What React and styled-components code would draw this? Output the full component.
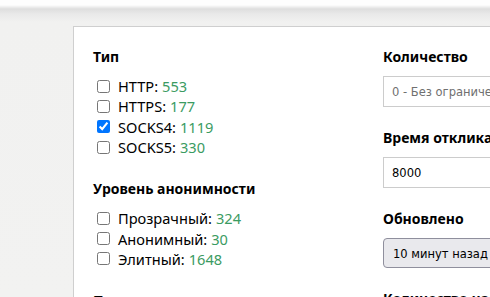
import React from 'react';
import styled, { createGlobalStyle } from 'styled-components';

const GlobalStyle = createGlobalStyle`
  html, body {
    margin: 0;
    padding: 0;
  }
  body {
    width: 490px;
    height: 297px;
    overflow: hidden;
    background: #f2f2f1;
    font-family: "Noto Sans", "Liberation Sans", sans-serif;
    color: #000;
  }
`;

const Page = styled.div`
  height: 297px;
  overflow: hidden;
  display: flex;
  flex-direction: column;
  background:
    linear-gradient(to bottom, #fefefe 0, #fefefe 5px, #dedede 9px, #e9e9e9 14px, #f1f1f0 22px, #f2f2f1 100%);
`;

const Card = styled.div`
  margin: 26px 0 0 73px;
  background: #fff;
  border: 1px solid #cfcfcf;
  border-right: none;
  border-bottom: none;
  padding: 20px 0 0 19px;
  display: grid;
  grid-template-columns: 290px 260px;
  flex: 1;
`;

const Column = styled.div`
  display: flex;
  flex-direction: column;
`;

const Heading = styled.div`
  font-weight: 700;
  font-size: 14px;
  line-height: 20px;
  white-space: nowrap;
  margin-bottom: 9px;
`;

const Group = styled.div`
  display: flex;
  flex-direction: column;
  margin-bottom: 22px;
`;

const Option = styled.label`
  display: flex;
  align-items: center;
  height: 20.3px;
  font-size: 14.6px;
  white-space: nowrap;
  input {
    width: 13px;
    height: 13px;
    margin: 0 8px 0 4px;
    accent-color: #0075ff;
  }
`;

const Count = styled.span`
  color: #3b9b62;
  margin-left: 4px;
`;

const Field = styled.div`
  display: flex;
  flex-direction: column;
  margin-bottom: 21px;
`;

const TextInput = styled.input`
  box-sizing: border-box;
  width: 200px;
  height: 31px;
  border: 1px solid #cccccc;
  border-radius: 0;
  padding: 0 8px;
  font-family: "DejaVu Sans Condensed", "DejaVu Sans", sans-serif;
  font-size: 12.8px;
  color: #000;
  outline: none;
  &::placeholder {
    color: #707070;
  }
`;

const SelectButton = styled.div`
  box-sizing: border-box;
  width: 200px;
  height: 30px;
  display: flex;
  align-items: center;
  padding: 0 9px;
  background: #e9e9ed;
  border: 1px solid #8f8f9d;
  border-radius: 4px;
  font-family: "DejaVu Sans Condensed", "DejaVu Sans", sans-serif;
  font-size: 12.8px;
  white-space: nowrap;
`;

const types = [
  { name: 'HTTP', count: 553 },
  { name: 'HTTPS', count: 177 },
  { name: 'SOCKS4', count: 1119, checked: true },
  { name: 'SOCKS5', count: 330 },
];

const levels = [
  { name: 'Прозрачный', count: 324 },
  { name: 'Анонимный', count: 30 },
  { name: 'Элитный', count: 1648 },
];

function OptionList({ items }) {
  return items.map((item) => (
    <Option key={item.name}>
      <input type="checkbox" defaultChecked={!!item.checked} />
      <span>
        {item.name}:<Count>{item.count}</Count>
      </span>
    </Option>
  ));
}

export default function App() {
  return (
    <>
      <GlobalStyle />
      <Page>
        <Card>
          <Column>
            <Heading>Тип</Heading>
            <Group>
              <OptionList items={types} />
            </Group>
            <Heading>Уровень анонимности</Heading>
            <Group>
              <OptionList items={levels} />
            </Group>
            <Heading>Прокси для сервисов</Heading>
          </Column>
          <Column>
            <Field>
              <Heading>Количество</Heading>
              <TextInput placeholder="0 - Без ограничений" />
            </Field>
            <Field>
              <Heading>Время отклика</Heading>
              <TextInput defaultValue="8000" />
            </Field>
            <Field>
              <Heading>Обновлено</Heading>
              <SelectButton>10 минут назад</SelectButton>
            </Field>
            <Heading>Количество на странице</Heading>
          </Column>
        </Card>
      </Page>
    </>
  );
}
